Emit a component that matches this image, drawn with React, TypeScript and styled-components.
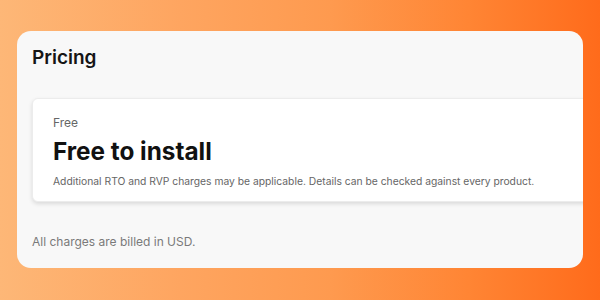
import React from "react";
import styled, { createGlobalStyle } from "styled-components";

const Global = createGlobalStyle`
  html, body { margin: 0; padding: 0; }
  body { font-family: Inter, "Noto Sans", sans-serif; }
`;

const Page = styled.div`
  width: 600px;
  height: 300px;
  box-sizing: border-box;
  padding: 31px 17px 32px 17px;
  background: linear-gradient(90deg, #fdb777 0%, #fea560 30%, #fe9a4f 55%, #ff8534 78%, #ff6b1b 100%);
  display: flex;
`;

const Panel = styled.section`
  flex: 1;
  background: #f8f8f8;
  border-radius: 14px;
  overflow: hidden;
  padding: 15px 0 0 15px;
  display: flex;
  flex-direction: column;
`;

const Title = styled.h2`
  margin: 0;
  font-size: 19px;
  line-height: 24px;
  font-weight: 600;
  color: #151515;
`;

const Card = styled.div`
  margin-top: 28px;
  margin-right: -8px;
  background: #ffffff;
  border: 1px solid #ececec;
  border-radius: 6px;
  box-shadow: 0 2px 4px rgba(0, 0, 0, 0.12);
  padding: 16px 0 13px 20px;
  display: flex;
  flex-direction: column;
`;

const Label = styled.div`
  font-size: 12px;
  line-height: 16px;
  color: #666;
`;

const Headline = styled.div`
  margin-top: 5px;
  font-size: 24.3px;
  line-height: 30px;
  font-weight: 700;
  color: #111;
`;

const Note = styled.div`
  margin-top: 8px;
  font-size: 10.3px;
  line-height: 14px;
  color: #666;
  white-space: nowrap;
`;

const Footer = styled.div`
  margin-top: 32px;
  font-size: 12px;
  line-height: 16px;
  color: #7a7a7a;
`;

export default function App() {
  return (
    <Page>
      <Global />
      <Panel>
        <Title>Pricing</Title>
        <Card>
          <Label>Free</Label>
          <Headline>Free to install</Headline>
          <Note>
            Additional RTO and RVP charges may be applicable. Details can be checked against every product.
          </Note>
        </Card>
        <Footer>All charges are billed in USD.</Footer>
      </Panel>
    </Page>
  );
}
